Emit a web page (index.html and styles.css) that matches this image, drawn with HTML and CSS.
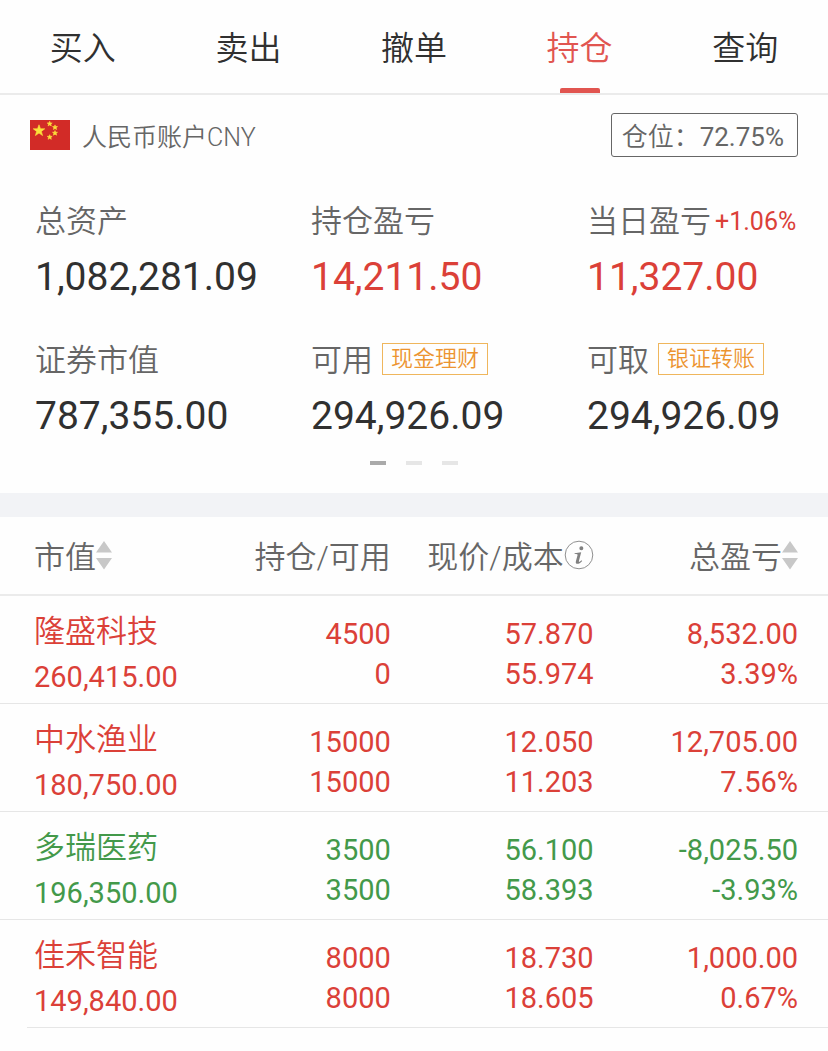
FILE: index.html
```html
<!DOCTYPE html>
<html lang="zh-CN">
<head>
    <meta charset="UTF-8">
    <meta name="viewport" content="width=device-width, initial-scale=1.0">
    <title>持仓</title>
    <link rel="stylesheet" href="styles.css">
</head>
<body>

    <nav class="tabs">
        <a href="#buy">买入</a>
        <a href="#sell">卖出</a>
        <a href="#cancel">撤单</a>
        <a href="#position" class="active">持仓</a>
        <a href="#query">查询</a>
    </nav>

    <section class="summary">
        <div class="account">
            <svg class="flag" viewBox="0 0 40 30">
                <rect width="40" height="30" fill="#d22b27"/>
                <g fill="#fbe13b" stroke="#fbe13b" stroke-width=".6">
                    <path d="M9 4.800l1.500 4h4.300l-3.400 2.600 1.200 4.200L9 13.100l-3.600 2.500 1.200-4.200-3.400-2.600h4.300z"/>
                    <path id="star" d="M19.700 1.300l.7 1.600 1.800.1-1.400 1.100.5 1.800-1.600-1-1.600 1 .5-1.800-1.400-1.100 1.800-.1z"/>
                    <use href="#star" x="5.300" y="3.600"/>
                    <use href="#star" x="5.300" y="9.300"/>
                    <use href="#star" y="13.400"/>
                </g>
            </svg>
            <span class="account-name">人民币账户CNY</span>
            <button class="ratio" type="button">仓位：<span>72.75%</span></button>
        </div>

        <div class="stats">
            <div class="stat">
                <div class="label">总资产</div>
                <div class="value">1,082,281.09</div>
            </div>
            <div class="stat">
                <div class="label">持仓盈亏</div>
                <div class="value up">14,211.50</div>
            </div>
            <div class="stat">
                <div class="label">当日盈亏<span class="rate up">+1.06%</span></div>
                <div class="value up">11,327.00</div>
            </div>
            <div class="stat">
                <div class="label">证券市值</div>
                <div class="value">787,355.00</div>
            </div>
            <div class="stat">
                <div class="label">可用<a class="tag" href="#cash">现金理财</a></div>
                <div class="value">294,926.09</div>
            </div>
            <div class="stat">
                <div class="label">可取<a class="tag" href="#transfer">银证转账</a></div>
                <div class="value">294,926.09</div>
            </div>
        </div>

        <div class="pager">
            <span class="current"></span>
            <span></span>
            <span></span>
        </div>
    </section>

    <table class="positions">
        <thead>
            <tr>
                <th><button type="button">市值<svg class="sort" viewBox="0 0 16 30"><path d="M8 1l8 11.500H0zM8 29.500L0 18h16z"/></svg></button></th>
                <th>持仓/可用</th>
                <th><button type="button">现价/成本<svg class="info" viewBox="0 0 30 30"><circle cx="15" cy="15" r="13.800"/><path d="M17.400 6.200a2 2 0 1 1-.1 4 2 2 0 0 1 .1-4zM10.600 13.200l6.600-1-2.300 8.900c-.3 1.300.5 1.100 2.600-.9l.7.700c-3.100 3.700-7.300 3.900-6.300.3l1.600-6c.3-.9-.4-1.100-2.900-1.100z"/></svg></button></th>
                <th><button type="button">总盈亏<svg class="sort" viewBox="0 0 16 30"><path d="M8 1l8 11.500H0zM8 29.500L0 18h16z"/></svg></button></th>
            </tr>
        </thead>
        <tbody>
            <tr class="up">
                <td><span class="name">隆盛科技</span><span>260,415.00</span></td>
                <td><span>4500</span><span>0</span></td>
                <td><span>57.870</span><span>55.974</span></td>
                <td><span>8,532.00</span><span>3.39%</span></td>
            </tr>
            <tr class="up">
                <td><span class="name">中水渔业</span><span>180,750.00</span></td>
                <td><span>15000</span><span>15000</span></td>
                <td><span>12.050</span><span>11.203</span></td>
                <td><span>12,705.00</span><span>7.56%</span></td>
            </tr>
            <tr class="down">
                <td><span class="name">多瑞医药</span><span>196,350.00</span></td>
                <td><span>3500</span><span>3500</span></td>
                <td><span>56.100</span><span>58.393</span></td>
                <td><span>-8,025.50</span><span>-3.93%</span></td>
            </tr>
            <tr class="up">
                <td><span class="name">佳禾智能</span><span>149,840.00</span></td>
                <td><span>8000</span><span>8000</span></td>
                <td><span>18.730</span><span>18.605</span></td>
                <td><span>1,000.00</span><span>0.67%</span></td>
            </tr>
        </tbody>
    </table>

</body>
</html>
```
FILE: styles.css
```css
* {
    box-sizing: border-box;
}

body {
    margin: 0;
    background-color: #fefefe;
    color: #666;
    font-family: Roboto, "Noto Sans CJK SC", sans-serif;
    font-weight: 350;
}

a {
    color: inherit;
    text-decoration: none;
}

button {
    margin: 0;
    padding: 0;
    border: none;
    background: none;
    color: inherit;
    font: inherit;
    cursor: pointer;
}

.up {
    color: #db4038;
}

.down {
    color: #43994a;
}

/* top tabs */
.tabs {
    display: flex;
    border-bottom: 2px solid #ebebeb;
}

.tabs a {
    display: flex;
    flex: 1;
    flex-direction: column;
    align-items: center;
    padding-top: 25px;
    color: #303030;
    font-size: 33px;
    line-height: 48px;
}

.tabs a::after {
    content: "";
    width: 40px;
    height: 5px;
    margin-top: 15px;
    border-radius: 2px 2px 0 0;
}

.tabs .active {
    color: #e15550;
}

.tabs .active::after {
    background-color: #e15550;
}

/* account summary */
.summary {
    padding-bottom: 28px;
    border-bottom: 24px solid #f2f3f6;
}

.account {
    display: flex;
    align-items: center;
    padding: 18px 30px 0;
    font-size: 25px;
}

.flag {
    width: 40px;
    height: 30px;
    margin-right: 12px;
}

.ratio {
    height: 44px;
    margin-left: auto;
    padding: 0 13px 2px 10px;
    border: 1px solid #666;
    border-radius: 3px;
    font-size: 26px;
}

.ratio span,
.rate {
    font-weight: 400;
}

.stats {
    display: grid;
    grid-template-columns: repeat(3, 1fr);
    row-gap: 33px;
    padding: 42px 0 0 35px;
    margin-right: -35px;
    overflow: hidden;
}

.label {
    display: flex;
    align-items: center;
    font-size: 31px;
    line-height: 46px;
    white-space: nowrap;
}

.rate {
    margin-left: 4px;
    font-size: 25px;
}

.tag {
    margin: 0 0 4px 9px;
    padding: 0 8px;
    border: 1px solid #efb65c;
    color: #ec9430;
    font-size: 22px;
    line-height: 30px;
}

.value {
    margin-top: 4px;
    font-size: 39px;
    font-weight: 400;
    line-height: 56px;
}

.value:not(.up) {
    color: #303030;
}

.pager {
    display: flex;
    justify-content: center;
    gap: 20px;
    margin-top: 17px;
}

.pager span {
    width: 16px;
    height: 4px;
    background-color: #e6e6e6;
}

.pager .current {
    background-color: #aaa;
}

/* positions table */
.positions {
    width: 100%;
    border-collapse: separate;
    border-spacing: 0;
    table-layout: fixed;
    font-size: 29px;
}

.positions th {
    height: 79px;
    padding: 0 0 2px;
    border-bottom: 2px solid #ebebeb;
    font-size: 31px;
    font-weight: inherit;
    text-align: right;
    white-space: nowrap;
}

.positions td {
    height: 108px;
    padding: 8px 0 0;
    border-bottom: 1px solid #e6e6e6;
    font-weight: 400;
    text-align: right;
}

.positions th:first-child,
.positions td:first-child {
    width: 26%;
    padding-left: 34px;
    text-align: left;
}

.positions td:first-child {
    padding-top: 5px;
}

.positions th:nth-child(2) {
    width: 21.2%;
}

.positions th:nth-child(3) {
    width: 24.5%;
}

.positions th:last-child,
.positions td:last-child {
    padding-right: 30px;
}

/* the closing line starts near the text, not at the edge */
.positions tr:last-child td:first-child {
    border-image: linear-gradient(to right, transparent 28px, #e6e6e6 28px) 1;
}

.positions th button {
    display: inline-flex;
    align-items: center;
    vertical-align: middle;
}

.positions td span {
    display: block;
    line-height: 40px;
}

.positions td .name {
    font-size: 31px;
    font-weight: 350;
    line-height: 50px;
}

.sort {
    width: 16px;
    height: 30px;
    fill: #c8c8c8;
}

.info {
    width: 30px;
    height: 30px;
    fill: #808080;
}

.info circle {
    fill: none;
    stroke: #909090;
}
```
